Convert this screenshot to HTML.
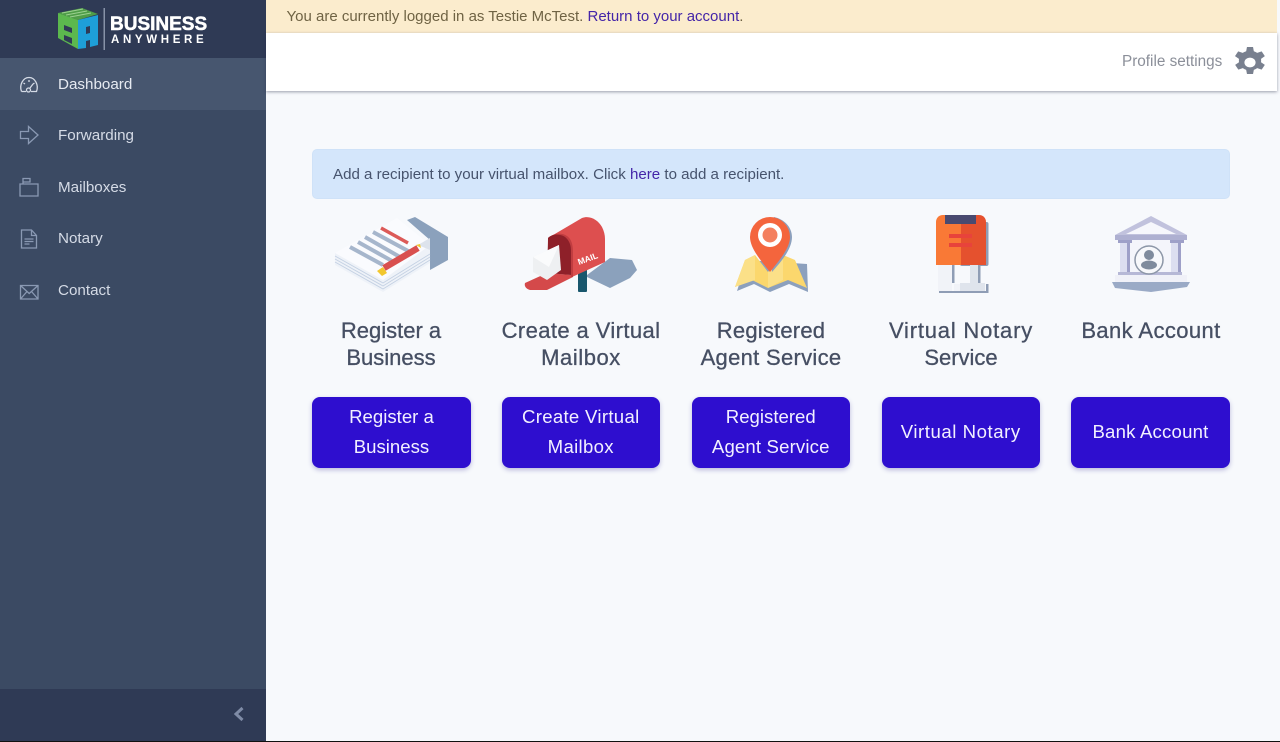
<!DOCTYPE html>
<html><head><meta charset="utf-8"><style>
*{box-sizing:border-box}
html,body{margin:0;padding:0;width:1280px;height:742px;overflow:hidden;background:#f7f9fc;font-family:"Liberation Sans",sans-serif}
.a{position:absolute;white-space:nowrap}
#side{position:absolute;left:0;top:0;width:266px;height:741px;background:#3b4a63}
.nav{position:absolute;left:58px;font-size:15.2px;color:#d5dbe6;line-height:20px;white-space:nowrap}
.ic{position:absolute;left:18px;width:22px;height:22px;fill:none;stroke:#8a99b3;stroke-width:1.3}
.h{position:absolute;width:190px;text-align:center;font-size:22px;line-height:26.5px;color:#464f63;top:318px;-webkit-text-stroke:.3px #464f63}
.b{position:absolute;top:397px;width:159px;height:71px;background:#2e0ecf;border-radius:8px;color:#f2f0ff;font-size:18.6px;line-height:30px;padding-bottom:2px;text-align:center;display:flex;align-items:center;justify-content:center;box-shadow:0 2px 5px rgba(50,40,150,.3)}
.il{position:absolute;top:210px}
</style></head><body>
<div id="side">
<div class="a" style="left:0;top:0;width:266px;height:58px;background:#2f3a55"></div>
<svg class="a" style="left:50px;top:0" width="60" height="56" viewBox="50 0 60 56">
<path d="M58 13L82 8l16 6-20 6z" fill="#4f9d48"/>
<path d="M62 13l21-4M66 15l21-4M70 17l21-4" stroke="#9bd08f" stroke-width=".9"/>
<path d="M58 13l20 7v29l-20-11z" fill="#5cb84e"/>
<path d="M64 25l8 3v5l-8-3zM64 35l8 3v6l-8-4z" fill="#2f3a55"/>
<path d="M78 20l20-5v30l-8 2v-7l-4 1v7l-8 1z" fill="#1e9fd8"/>
<path d="M86 27l4-1v7l-4 1z" fill="#2f3a55"/>
<rect x="103.500" y="8" width="1.500" height="42" fill="#8792a8"/></svg>
<div class="a" style="left:110px;top:13px;font-size:19px;font-weight:bold;color:#fff;line-height:24px;-webkit-text-stroke:.5px #fff">BUSINESS</div>
<div class="a" style="left:111px;top:34px;font-size:11.500px;font-weight:bold;color:#fff;line-height:13px;letter-spacing:3.650px">ANYWHERE</div>
<div class="a" style="left:0;top:58px;width:266px;height:52px;background:#47566f"></div>
<svg class="ic" style="top:73px" viewBox="0 0 22 22"><path d="M3.500 18.500C1 12 5 4.500 11 4.500s10 7.500 7.500 14h-5.500M8 18.500H3.500M11 7v2M5.500 10l1.500 1M16.500 10l-1.500 1M12 15l3-4" style="stroke:#d5dbe6"/><circle cx="10.500" cy="17" r="2" style="stroke:#d5dbe6"/></svg>
<div class="nav" style="top:75px;color:#e6eaf1">Dashboard</div>
<svg class="ic" style="top:124px" viewBox="0 0 22 22"><path d="M2.500 7.500h8V2.500L20 11l-9.500 8.500v-5h-8z"/></svg>
<div class="nav" style="top:126px">Forwarding</div>
<svg class="ic" style="top:176px" viewBox="0 0 22 22"><path d="M2 8h18v12H2zM5 8V2.500h7V6H5"/></svg>
<div class="nav" style="top:178px">Mailboxes</div>
<svg class="ic" style="top:228px" viewBox="0 0 22 22"><path d="M3.500 2h10l5 5.500V20h-15zM13.500 2v5.500h5M6.500 11h9M6.500 13.500h9M6.500 16h5"/></svg>
<div class="nav" style="top:229px">Notary</div>
<svg class="ic" style="top:281px" viewBox="0 0 22 22"><path d="M2.500 4.500h17.500v13.500H2.500zM2.500 4.500l8.700 8 8.800-8M2.500 18l6.500-7.500M20 18l-6.500-7.500"/></svg>
<div class="nav" style="top:281px">Contact</div>
<div class="a" style="left:0;top:689px;width:266px;height:52px;background:#2f3a55"></div>
<svg class="a" style="left:232px;top:706px" width="14" height="16" viewBox="0 0 14 16"><path d="M10.500 2L4 8l6.500 6" fill="none" stroke="#7f8ba6" stroke-width="3"/></svg>
</div>

<div class="a" style="left:266px;top:0;width:1011px;height:33px;background:#fbeccd;color:#6f6344;font-size:15px;line-height:33px;padding-left:20.500px">You are currently logged in as Testie McTest. <span style="color:#4425a8">Return to your account</span>.</div>
<div class="a" style="left:266px;top:33px;width:1011px;height:58px;background:#fff;box-shadow:0 1px 3px rgba(40,45,70,.45)"></div>
<div class="a" style="left:1122px;top:52px;font-size:15.300px;line-height:20px;color:#8b8f99">Profile settings</div>
<svg class="a" style="left:1235px;top:47px" width="30" height="31" viewBox="2.600 1 18.800 22" preserveAspectRatio="none"><path fill="#79808f" fill-rule="evenodd" d="M13.900 1l.5 3a8.500 8.500 0 0 1 2.100 1.200l2.800-1.100 2 3.400-2.400 1.900a8.500 8.500 0 0 1 0 2.400l2.400 1.900-2 3.400-2.800-1.100a8.500 8.500 0 0 1-2.100 1.200l-.5 3h-3.800l-.5-3a8.500 8.500 0 0 1-2.100-1.200l-2.800 1.100-2-3.400 2.400-1.900a8.500 8.500 0 0 1 0-2.400L2.600 7.500l2-3.400 2.800 1.100A8.500 8.500 0 0 1 9.600 4l.5-3zM12 8.500a3.500 3.500 0 1 0 0 7 3.500 3.500 0 0 0 0-7z"/></svg>

<div class="a" style="left:312px;top:149px;width:918px;height:50px;background:#d4e6fb;border:1px solid #cfe2f8;border-radius:5px;color:#46536d;font-size:15.100px;line-height:47px;padding-left:20px;padding-top:1px">Add a recipient to your virtual mailbox. Click <span style="color:#4425a8">here</span> to add a recipient.</div>

<svg class="il" style="left:326px" width="130" height="90" viewBox="326 210 130 90">
<path d="M407 220l8-3 33 20v23l-18 10v-30z" fill="#8ba1bc"/>
<path d="M335 253v12l48 27 47-29v-18z" fill="#eef2f8"/>
<path d="M335 256l48 27 47-29M335 259l48 27 47-29M335 262l48 27 47-29" fill="none" stroke="#c4d1e3" stroke-width=".9"/>
<path d="M335 253l62-35 33 27-47 35z" fill="#fafbfe"/>
<path d="M418 245l12-7v12z" fill="#dde3ec"/>
<path d="M350 247l33 18M358 242l34 19M365 237l35 20M373 232l37 20" stroke="#a6b6cc" stroke-width="4"/>
<path d="M381 228l27 15" stroke="#dc5a58" stroke-width="3.500"/>
<path d="M384 268l34-20" stroke="#d9504f" stroke-width="6.500"/>
<path d="M377 271l6-4 4 6-5 3z" fill="#f2c72e"/><path d="M416 245l4-1 1 4z" fill="#f2c72e"/>
</svg>
<svg class="il" style="left:516px" width="130" height="90" viewBox="516 210 130 90">
<path d="M587 275l23-17 22 2 5 10-7 8-20 10-23-11z" fill="#8ba1bc"/>
<rect x="578" y="268" width="9" height="24" rx="1" fill="#19576d"/>
<path d="M525 283l22-10 25 2 1 2-26 13-17 0c-4-1-6-4-5-7z" fill="#d4494a"/>
<path d="M548 238l34-20c8-3 16 2 20 9 2 4 3 8 3 12v23l-33 15z" fill="#dd4f4f"/>
<path d="M548 238c7-6 17-6 22 1 3 5 3 10 3 15v23l-2 0v-25c0-7-3-14-10-15-6-1-10 1-13 3z" fill="#c03d40"/>
<path d="M548 238c3-3 7-4 12-3 7 1 11 8 11 15v25l-24-2c0-10 1-25 1-35z" fill="#8e2029"/>
<path d="M533 257l26-12 2 25-14 10-14-8z" fill="#eef0f2"/><path d="M533 257l26-12-10 22z" fill="#fafbfc"/>
<text transform="translate(579 265) rotate(-20)" font-family="Liberation Sans" font-weight="bold" font-size="8.500" fill="#fff">MAIL</text>
</svg>
<svg class="il" style="left:726px" width="90" height="90" viewBox="726 210 90 90">
<path d="M737 291l10-31 60 4 1 28-19-8-19 8-16-8z" fill="#8ca0bd"/>
<path d="M745 260l10-5 13 17 15-17 12 5 12 28-19-8-20 8-16-8-17 7z" fill="#fbd76d"/>
<path d="M745 260l10-5v25l-20 7z" fill="#fbe088"/><path d="M768 272l15-17v25l-15 8z" fill="#fbe088"/>
<path d="M792 237c0 13-13 27-20 35l-2-30 4-25c10 2 18 10 18 20z" fill="#8ca0bd"/>
<path d="M770 272c-7-9-20-23-20-35a20 20 0 0 1 40 0c0 12-13 26-20 35z" fill="#f4653d"/>
<circle cx="770" cy="235" r="12" fill="#fff"/><circle cx="770" cy="235" r="7.500" fill="#f4805f"/>
</svg>
<svg class="il" style="left:925px" width="75" height="90" viewBox="925 210 75 90">
<rect x="960" y="222" width="28.500" height="44" rx="2" fill="#8f9db5"/>
<path d="M943 215h18v50h-25V222c0-4 3-7 7-7z" fill="#f97936"/><path d="M961 215h18c4 0 7 3 7 7v43h-25z" fill="#e5512e"/>
<path d="M945 215h31v9h-31z" fill="#494a70"/>
<rect x="949" y="234" width="23" height="4" fill="#e8433b"/><rect x="949" y="243" width="23" height="4" fill="#e8433b"/>
<rect x="938" y="265" width="14" height="26" fill="#f1f3f8"/><rect x="954" y="284" width="8" height="7" fill="#f1f3f8"/>
<rect x="952" y="265" width="2.500" height="18" fill="#8f9db5"/><rect x="978" y="265" width="2.500" height="18" fill="#8f9db5"/>
<path d="M970 265h8v18h7v8h-25v-8h10z" fill="#dfe4ec"/>
<path d="M986 284h2.500v9H939v-2h47z" fill="#8f9db5"/>
</svg>
<svg class="il" style="left:1105px" width="90" height="90" viewBox="1105 210 90 90">
<path d="M1151 216l36 19v1h-72v-1z" fill="#c1c2dd"/><path d="M1151 222l-25 12h50z" fill="#f6f7fc"/>
<rect x="1115" y="235" width="72" height="5" fill="#aeb0d1"/>
<rect x="1124" y="240" width="52" height="34" fill="#f4f5fb"/>
<rect x="1118" y="240" width="14" height="3" fill="#9ea0c8"/><rect x="1170" y="240" width="14" height="3" fill="#9ea0c8"/>
<rect x="1120" y="243" width="7" height="29" fill="#dcdef0"/><rect x="1127" y="243" width="3" height="29" fill="#9ea0c8"/>
<rect x="1171" y="243" width="7" height="29" fill="#dcdef0"/><rect x="1178" y="243" width="3" height="29" fill="#9ea0c8"/>
<rect x="1118" y="272" width="64" height="3" fill="#b6b8d6"/>
<rect x="1115" y="275" width="72" height="7" fill="#f0f1f8"/>
<path d="M1112 282h78l-3 5-36 5-36-4z" fill="#9aaac6"/>
<circle cx="1149" cy="260" r="14" fill="#f7f8fb" stroke="#8d97a8" stroke-width="1.500"/>
<circle cx="1149" cy="255" r="5" fill="#7f8b9d"/><ellipse cx="1149" cy="265" rx="8" ry="4.500" fill="#7f8b9d"/>
</svg>

<div class="h" style="left:296px">Register a<br>Business</div>
<div class="h" style="left:486px"><span style="letter-spacing:.4px">Create a Virtual</span><br><span style="letter-spacing:.55px">Mailbox</span></div>
<div class="h" style="left:676px"><span style="letter-spacing:.2px">Registered</span><br><span style="letter-spacing:.3px">Agent Service</span></div>
<div class="h" style="left:866px"><span style="letter-spacing:.8px">Virtual Notary</span><br>Service</div>
<div class="h" style="left:1056px"><span style="letter-spacing:.4px">Bank Account</span></div>

<div class="b" style="left:312px">Register a<br>Business</div>
<div class="b" style="left:501.500px;width:158.500px"><span><span style="letter-spacing:.3px">Create Virtual</span><br><span style="letter-spacing:.3px">Mailbox</span></span></div>
<div class="b" style="left:691.500px;width:158.500px"><span>Registered<br><span style="letter-spacing:.15px">Agent Service</span></span></div>
<div class="b" style="left:881.500px;width:158.500px"><span style="letter-spacing:.55px">Virtual Notary</span></div>
<div class="b" style="left:1071px"><span style="letter-spacing:.2px">Bank Account</span></div>

<div class="a" style="left:0;top:741px;width:1280px;height:1px;background:#111"></div>
</body></html>
